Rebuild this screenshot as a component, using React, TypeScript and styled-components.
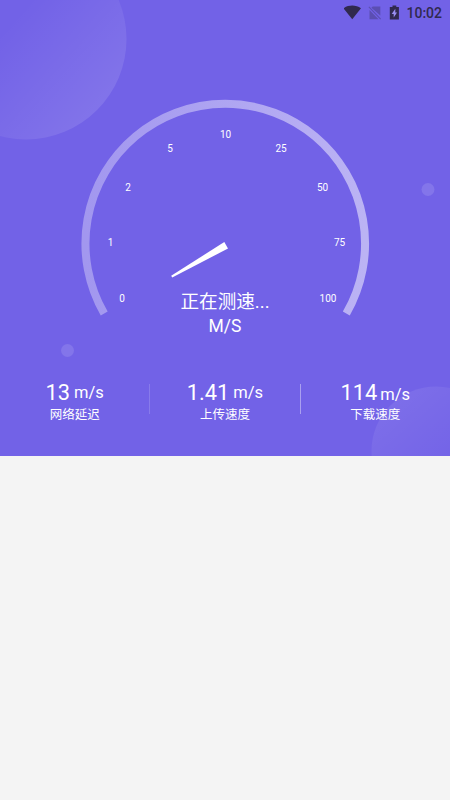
import React from 'react';
import styled, { createGlobalStyle } from 'styled-components';

const GlobalStyle = createGlobalStyle`
  body {
    margin: 0;
    background: #f4f4f4;
    font-family: Roboto, "Noto Sans CJK SC", sans-serif;
  }
`;

const Screen = styled.main`
  min-height: 800px;
  background: #f4f4f4;
`;

const Hero = styled.section`
  position: relative;
  height: 456px;
  overflow: hidden;
  background: #7262e7;
  color: #fff;
`;

const Backdrop = styled.svg`
  position: absolute;
  top: 0;
  left: 0;
`;

const StatusBar = styled.header`
  position: relative;
  display: flex;
  justify-content: flex-end;
  align-items: center;
  height: 25px;
  padding-right: 8px;
  color: #30294f;
`;

const StatusIcons = styled.svg`
  margin-right: 4px;
`;

const Clock = styled.time`
  padding-top: 1px;
  font-size: 14px;
  line-height: 24px;
  font-weight: 500;
`;

const Dial = styled.div`
  position: relative;
  width: 290px;
  height: 225px;
  margin: 74px auto 0;
`;

const DialFace = styled.svg`
  display: block;
  font-size: 10px;
`;

const Readout = styled.div`
  position: absolute;
  top: 190px;
  left: 0;
  width: 100%;
  text-align: center;
`;

const ReadoutState = styled.div`
  font-size: 18.6px;
  line-height: 27px;
`;

const ReadoutUnit = styled.div`
  font-size: 17.5px;
  line-height: 21px;
`;

const Stats = styled.ul`
  position: relative;
  display: flex;
  margin: 55px 0 0;
  padding: 0;
  list-style: none;
`;

const Stat = styled.li`
  flex: 1;
  height: 50px;
  text-align: center;
`;

const StatLine = styled.div<{ $gap: number }>`
  display: flex;
  justify-content: center;
  align-items: baseline;
  gap: ${({ $gap }) => $gap}px;
  height: 27px;
`;

const StatValue = styled.span`
  font-size: 21.8px;
  line-height: 28px;
`;

const StatUnit = styled.span<{ $drop: number }>`
  font-size: 16.5px;
  line-height: 20px;
  transform: translateY(${({ $drop }) => $drop}px);
`;

const StatLabel = styled.div`
  font-size: 12.5px;
  line-height: 18px;
`;

const Divider = styled.li<{ $opacity: number }>`
  width: 1px;
  height: 30px;
  margin-top: 5px;
  background: #fff;
  opacity: ${({ $opacity }) => $opacity};
`;

const ticks = [
  { label: '0', x: 42, y: 203 },
  { label: '1', x: 30.5, y: 147 },
  { label: '2', x: 48, y: 92 },
  { label: '5', x: 90, y: 53 },
  { label: '10', x: 145.5, y: 39 },
  { label: '25', x: 201, y: 53 },
  { label: '50', x: 242.5, y: 92 },
  { label: '75', x: 259.5, y: 147 },
  { label: '100', x: 248, y: 203 },
];

const App = () => (
  <Screen>
    <GlobalStyle />
    <Hero>
      <Backdrop width="450" height="456">
        <defs>
          <linearGradient id="bubble" x1="0.42" y1="0.42" x2="0.87" y2="0.82">
            <stop offset="0" stopColor="#fff" stopOpacity="0" />
            <stop offset="1" stopColor="#fff" stopOpacity="0.11" />
          </linearGradient>
          <linearGradient id="corner" x1="0" y1="0" x2="0.6" y2="0.7">
            <stop offset="0" stopColor="#fff" stopOpacity="0.1" />
            <stop offset="1" stopColor="#fff" stopOpacity="0" />
          </linearGradient>
        </defs>
        <circle cx="26" cy="39" r="100.5" fill="url(#bubble)" />
        <circle cx="436" cy="451" r="64.5" fill="url(#corner)" />
        <circle cx="428" cy="189.500" r="6.500" fill="#fff" opacity="0.12" />
        <circle cx="67.500" cy="350.500" r="6.500" fill="#fff" opacity="0.12" />
      </Backdrop>

      <StatusBar>
        <StatusIcons width="58" height="18" viewBox="0 0 58 18">
          <path d="M-0.500 4.300C4.500 0.700 12 0.700 17 4.300L8.250 15.300Z" fill="#30294f" />
          <g fill="#30294f" opacity="0.34">
            <path d="M28.700 2.500H36.300V11.500L27.400 3.700Z" />
            <path d="M25.500 5.900L34.500 15.300H25.500Z" />
            <path d="M24.500 3.300L25.300 2.500L37 14.700L36.200 15.500Z" />
          </g>
          <path d="M48.500 1.500H52.300V3H54.900V15.500H45.800V3H48.500Z" fill="#30294f" />
          <path d="M51.300 4.800L47.700 9.900H49.700V13.600L53 8.500H51.300Z" fill="#9a8ff2" />
        </StatusIcons>
        <Clock>10:02</Clock>
      </StatusBar>

      <Dial>
        <DialFace width="290" height="225" viewBox="0 0 290 225">
          <defs>
            <linearGradient id="track">
              <stop offset="0" stopColor="#a297ef" />
              <stop offset="1" stopColor="#bbb3f4" />
            </linearGradient>
          </defs>
          <path
            d="M24.200 214.500A139.800 139.800 0 1 1 266.300 214.500"
            fill="none"
            stroke="url(#track)"
            strokeWidth="8"
          />
          {ticks.map(({ label, x, y }) => (
            <text key={label} x={x} y={y} textAnchor="middle" fill="#fff">
              {label}
            </text>
          ))}
          <path d="M144.300 143L148 149.500L92.200 178.500L91.200 176.800Z" fill="#fff" />
        </DialFace>
        <Readout>
          <ReadoutState>正在测速...</ReadoutState>
          <ReadoutUnit>M/S</ReadoutUnit>
        </Readout>
      </Dial>

      <Stats>
        <Stat>
          <StatLine $gap={4}>
            <StatValue>13</StatValue>
            <StatUnit $drop={-2}>m/s</StatUnit>
          </StatLine>
          <StatLabel>网络延迟</StatLabel>
        </Stat>
        <Divider $opacity={0.16} />
        <Stat>
          <StatLine $gap={4}>
            <StatValue>1.41</StatValue>
            <StatUnit $drop={-2}>m/s</StatUnit>
          </StatLine>
          <StatLabel>上传速度</StatLabel>
        </Stat>
        <Divider $opacity={0.4} />
        <Stat>
          <StatLine $gap={3}>
            <StatValue>114</StatValue>
            <StatUnit $drop={0}>m/s</StatUnit>
          </StatLine>
          <StatLabel>下载速度</StatLabel>
        </Stat>
      </Stats>
    </Hero>
  </Screen>
);

export default App;
